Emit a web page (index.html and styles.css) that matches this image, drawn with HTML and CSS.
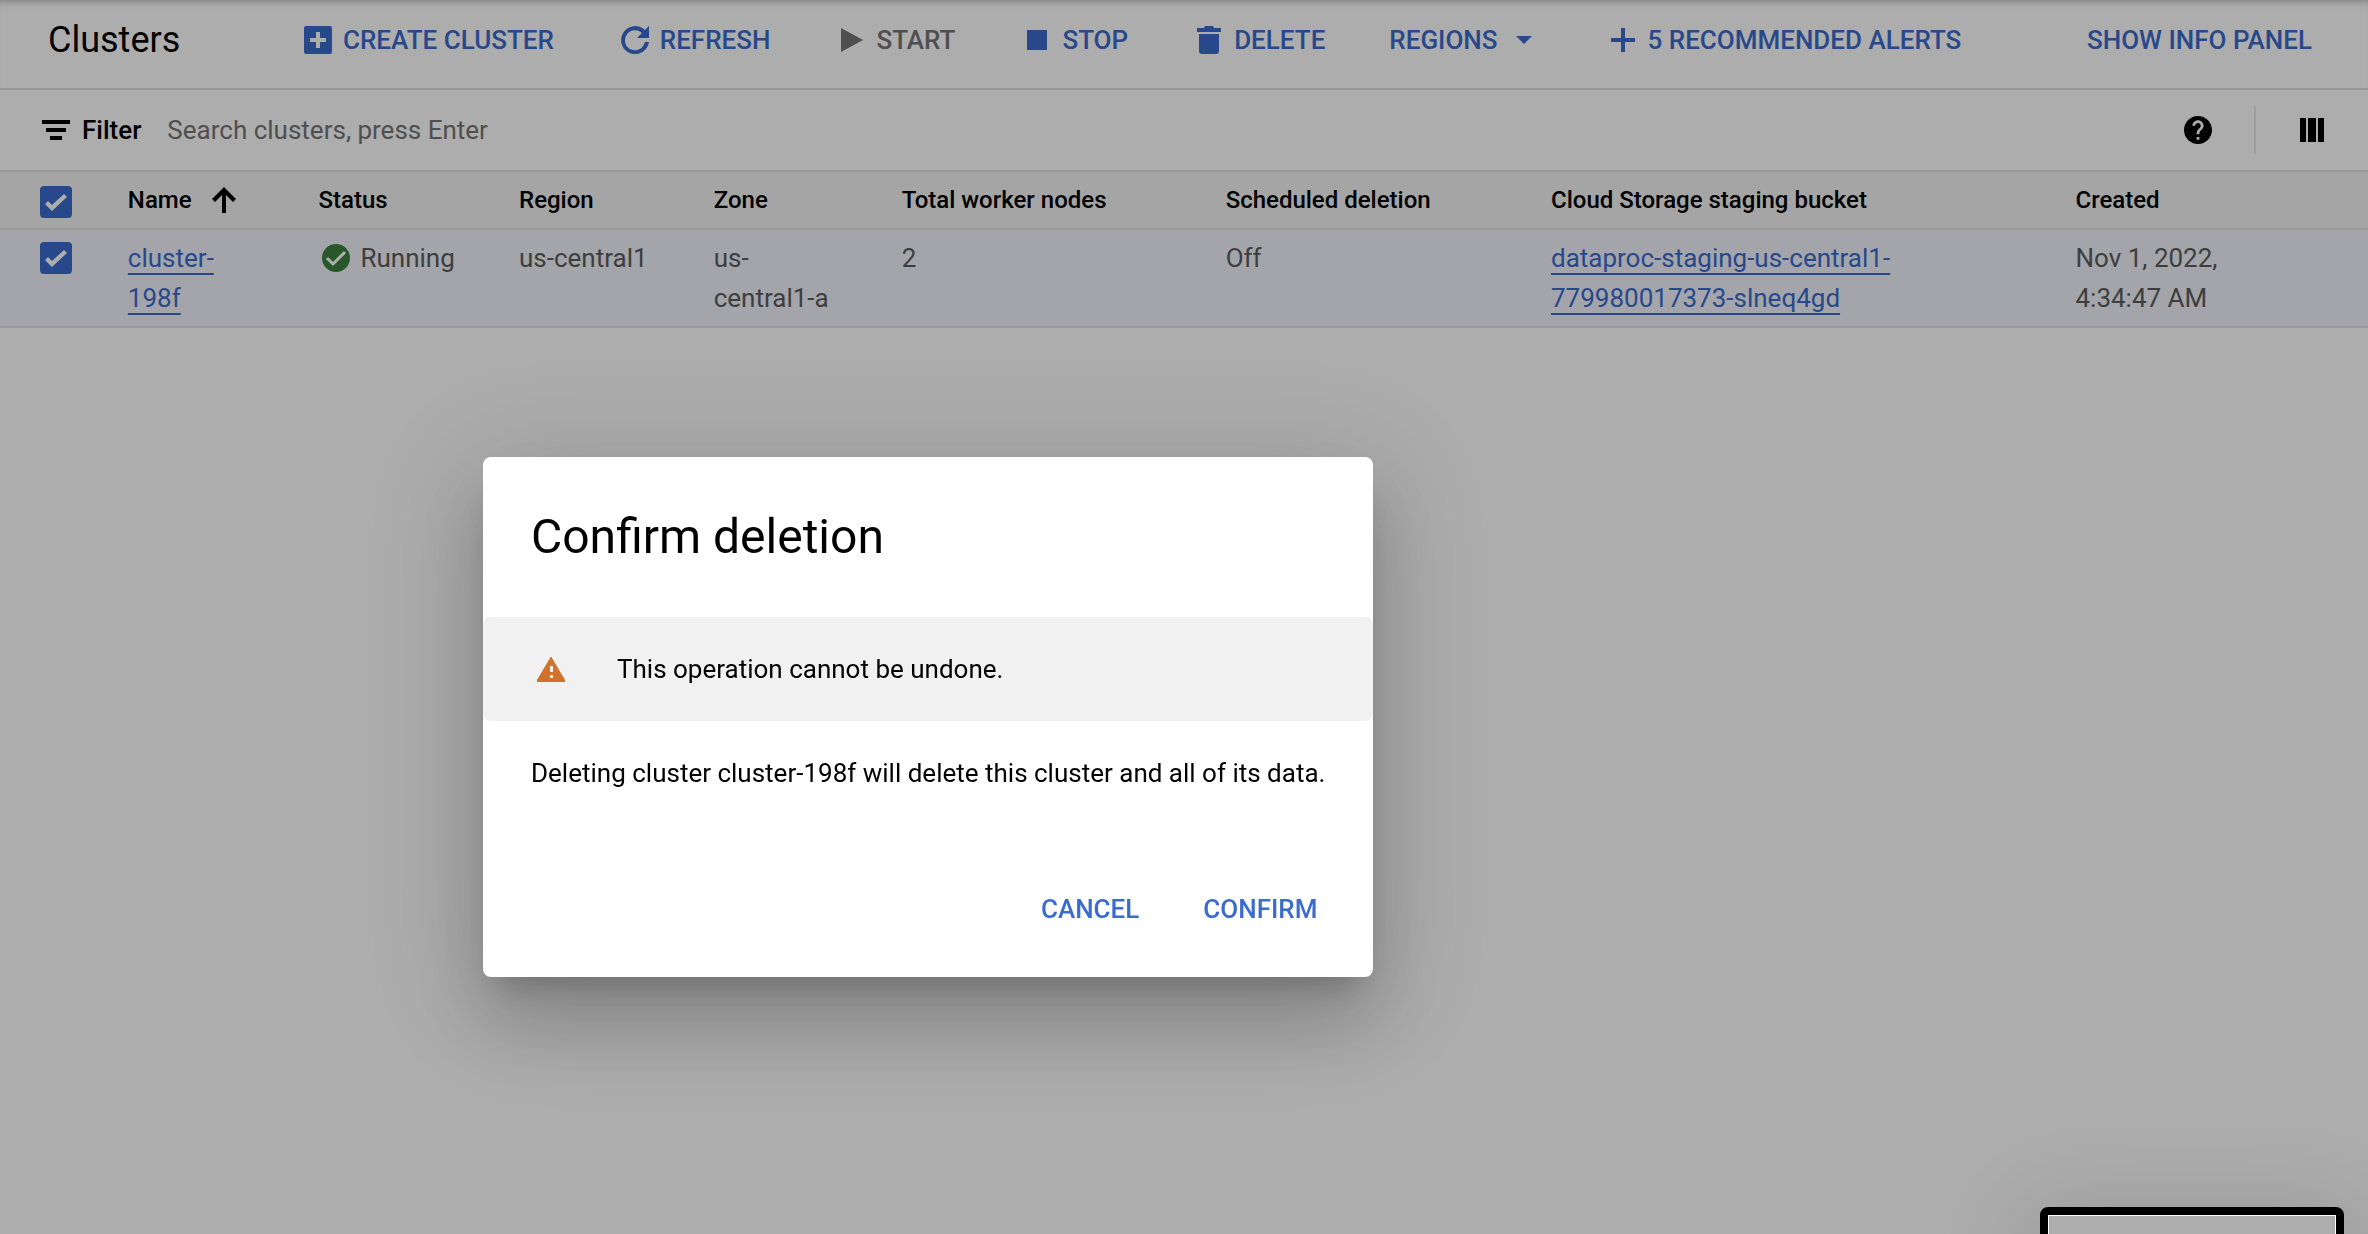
FILE: index.html
```html
<!DOCTYPE html>
<html lang="en">
<head>
<meta charset="utf-8">
<title>Clusters</title>
<meta name="viewport" content="width=device-width, initial-scale=1">
<link rel="stylesheet" href="styles.css">
</head>
<body>
<header class="toolbar">
  <h1 class="title">Clusters</h1>
  <button class="action create"><svg class="icon" viewBox="0 0 28 28"><path fill-rule="evenodd" d="M2 0h24a2 2 0 0 1 2 2v24a2 2 0 0 1-2 2H2a2 2 0 0 1-2-2V2a2 2 0 0 1 2-2zM12 6v6H6v4h6v6h4v-6h6v-4h-6V6z"/></svg>CREATE CLUSTER</button>
  <button class="action refresh"><svg class="icon" viewBox="0 0 28 28"><path d="M28 0v12H16l4.9-4.9A10 10 0 1 0 23.800 16H28A14 14 0 1 1 23.900 4.100z"/></svg>REFRESH</button>
  <button class="action start" disabled><svg class="icon" viewBox="0 0 28 28"><path d="M4 2l22 12L4 26z"/></svg>START</button>
  <button class="action stop"><svg class="icon" viewBox="0 0 28 28"><path d="M4 4h20v20H4z"/></svg>STOP</button>
  <button class="action delete"><svg class="icon" viewBox="0 0 28 28"><path d="M2 2h7l1-2h8l1 2h7v4H2zM4 8h20v17a3 3 0 0 1-3 3H7a3 3 0 0 1-3-3z"/></svg>DELETE</button>
  <button class="action regions">REGIONS<svg class="caret" viewBox="0 0 16 8"><path d="M0 0h16L8 8z"/></svg></button>
  <button class="action alerts"><svg class="icon" viewBox="0 0 28 28"><path d="M12 2h4v10h10v4H16v10h-4V16H2v-4h10z"/></svg>5 RECOMMENDED ALERTS</button>
  <button class="action info">SHOW INFO PANEL</button>
</header>
<main>
  <div class="filter">
    <svg class="icon" viewBox="0 0 28 20"><path d="M0 0h28v4H0zM4 8h20v4H4zM8 16h12v4H8z"/></svg>
    <label class="filter-label" for="search">Filter</label>
    <input class="search" id="search" type="text" placeholder="Search clusters, press Enter">
    <button class="tool" aria-label="Help"><svg class="icon" viewBox="2 2 20 20"><path d="M12 2C6.480 2 2 6.480 2 12s4.480 10 10 10 10-4.480 10-10S17.520 2 12 2zm1 17h-2v-2h2v2zm2.070-7.750l-.9.920C13.450 12.900 13 13.500 13 15h-2v-.5c0-1.100.45-2.100 1.170-2.830l1.240-1.260c.37-.36.59-.86.59-1.410 0-1.100-.9-2-2-2s-2 .9-2 2H8c0-2.210 1.790-4 4-4s4 1.790 4 4c0 .88-.36 1.680-.93 2.250z"/></svg></button>
    <span class="divider"></span>
    <button class="tool" aria-label="Column display options"><svg class="columns" viewBox="0 0 24 24"><path d="M0 0h6v24H0zM8 0h8v24H8zM18 0h6v24h-6z"/></svg></button>
  </div>
  <table class="clusters">
    <colgroup><col class="c-check"><col class="c-name"><col class="c-status"><col class="c-region"><col class="c-zone"><col class="c-nodes"><col class="c-deletion"><col class="c-bucket"><col class="c-created"></colgroup>
    <thead>
      <tr>
        <th><input class="check" type="checkbox" checked aria-label="Select all clusters"></th>
        <th><span class="sorted">Name<svg class="arrow" viewBox="0 0 24 26"><path d="M12 0l12 12-3 3-7-7v18h-4V8l-7 7-3-3z"/></svg></span></th>
        <th>Status</th><th>Region</th><th>Zone</th><th>Total worker nodes</th><th>Scheduled deletion</th><th>Cloud Storage staging bucket</th><th>Created</th>
      </tr>
    </thead>
    <tbody>
      <tr>
        <td><input class="check" type="checkbox" checked aria-label="Select cluster-198f"></td>
        <td><a class="link" href="#">cluster-<br>198f</a></td>
        <td><span class="status"><svg class="icon" viewBox="0 0 28 28"><circle cx="14" cy="14" r="14"/><path class="tick" d="M5 14l6 6L23 8"/></svg>Running</span></td>
        <td>us-central1</td>
        <td>us-<br>central1-a</td>
        <td>2</td>
        <td>Off</td>
        <td><a class="link" href="#">dataproc-staging-us-central1-<br>779980017373-slneq4gd</a></td>
        <td>Nov 1, 2022,<br>4:34:47 AM</td>
      </tr>
    </tbody>
  </table>
</main>
<div class="scrim"></div>
<section class="dialog" role="dialog" aria-labelledby="dialog-title">
  <h2 class="dialog-title" id="dialog-title">Confirm deletion</h2>
  <div class="warning"><svg class="warn-icon" viewBox="0 0 28 25"><path class="warn-shape" d="M13 1a1 1 0 0 1 2 0l13 22a1 1 0 0 1-1 2H1a1 1 0 0 1-1-2z"/><path class="warn-mark" d="M13 9h3v6h-3zM13 18h3v3h-3z"/></svg>This operation cannot be undone.</div>
  <p class="message">Deleting cluster cluster-198f will delete this cluster and all of its data.</p>
  <div class="buttons"><button class="action">CANCEL</button><button class="action">CONFIRM</button></div>
</section>
<aside class="corner-panel"></aside>
</body>
</html>
```
FILE: styles.css
```css
* { box-sizing: border-box; }

html, body { height: 100%; }

body {
  margin: 0;
  overflow: hidden;
  background: #fff;
  color: #000;
  font: 26px/40px Roboto, sans-serif;
}

button {
  padding: 0;
  border: 0;
  background: none;
  font: inherit;
}

.icon { width: 28px; height: 28px; fill: currentColor; flex: none; }

.toolbar {
  display: flex;
  align-items: center;
  height: 90px;
  padding: 0 56px 8px 48px;
  border-bottom: 2px solid #e0e0e0;
  box-shadow: inset 0 8px 8px -8px rgba(0, 0, 0, .4);
}

.title {
  width: 256px;
  margin: 0;
  font-size: 36px;
  font-weight: 400;
}

.action {
  display: flex;
  align-items: center;
  gap: 11px;
  color: #3b6bcf;
  font-weight: 500;
  white-space: nowrap;
}

.refresh { margin-left: 67px; }
.start { margin-left: 67px; }
.start:disabled { color: #757575; }
.stop { margin-left: 68px; }
.delete { margin-left: 67px; }
.regions { gap: 18px; margin-left: 64px; }
.alerts { margin-left: 77px; }
.info { margin-left: auto; }

.caret { width: 16px; height: 8px; fill: currentColor; }

.filter {
  display: flex;
  align-items: center;
  height: 82px;
  padding: 0 44px 0 42px;
  border-bottom: 2px solid #e0e0e0;
}

.filter > .icon { height: 20px; }
.filter-label { margin: 0 26px 0 12px; font-weight: 500; }

.search {
  flex: 1;
  min-width: 0;
  padding: 0;
  border: 0;
  background: none;
  font: inherit;
}

.search::placeholder { color: #757575; opacity: 1; }

.tool { display: flex; }
.divider { width: 2px; height: 48px; margin: 0 44px 0 42px; background: #ebebeb; }
.columns { width: 24px; height: 24px; }

.clusters {
  width: 100%;
  border-spacing: 0;
  table-layout: fixed;
}

.c-check { width: 5.400%; }
.c-name { width: 8.050%; }
.c-status { width: 8.470%; }
.c-region { width: 8.220%; }
.c-zone { width: 7.940%; }
.c-nodes { width: 13.680%; }
.c-deletion { width: 13.740%; }
.c-bucket { width: 22.150%; }

.clusters th {
  height: 58px;
  padding: 0;
  border-bottom: 2px solid #e0e0e0;
  background: #f3f3f3;
  font-size: 24px;
  font-weight: 500;
  text-align: left;
}

.clusters td {
  height: 98px;
  padding: 8px 0;
  border-bottom: 2px solid #e0e0e0;
  background: #f1f3fb;
  color: #5c5c5c;
  vertical-align: top;
}

.clusters th:first-child, .clusters td:first-child { padding-left: 40px; }
.clusters th:first-child { padding-top: 4px; }

.check {
  display: block;
  width: 32px;
  height: 32px;
  margin: 4px 0;
  appearance: none;
  border-radius: 4px;
  background: #3b6bcf;
}

.check::before {
  content: "";
  display: block;
  width: 32px;
  height: 32px;
  background: #fff;
  clip-path: polygon(5px 18px, 8px 15px, 12px 19px, 24px 8px, 27px 11px, 12px 25px);
}

.sorted { display: flex; align-items: center; gap: 20px; }
.arrow { width: 24px; height: 26px; }

.link {
  color: #3b6bcf;
  text-decoration: underline;
  text-decoration-thickness: 2px;
  text-decoration-skip-ink: none;
  text-underline-offset: 6px;
}

.status { display: flex; align-items: center; gap: 10px; padding-left: 4px; }
.status circle { fill: #3b813e; }
.tick { fill: none; stroke: #fff; stroke-width: 3; }

.scrim {
  position: fixed;
  inset: 0;
  background: rgba(0, 0, 0, .32);
}

.dialog {
  position: fixed;
  top: 457px;
  left: 483px;
  border-radius: 8px;
  background: #fff;
  box-shadow: 0 22px 30px -14px rgba(0, 0, 0, .2), 0 48px 76px 6px rgba(0, 0, 0, .14), 0 18px 120px 24px rgba(0, 0, 0, .12);
}

.dialog-title {
  margin: 0;
  padding: 48px;
  font-size: 48px;
  font-weight: 400;
  line-height: 64px;
}

.warning {
  display: flex;
  align-items: center;
  gap: 52px;
  height: 104px;
  padding: 0 54px;
  border-radius: 8px;
  background: #f1f1f1;
}

.warn-icon { width: 28px; height: 25px; }
.warn-shape { fill: #d0722c; }
.warn-mark { fill: #f1f1f1; }

.message { margin: 0; padding: 32px 48px 64px; }

.buttons {
  display: flex;
  justify-content: flex-end;
  gap: 64px;
  padding: 32px 56px 48px;
}

.corner-panel {
  position: fixed;
  right: 24px;
  bottom: -201px;
  width: 304px;
  height: 228px;
  border: 8px solid #000;
  border-radius: 8px;
  background: #adadad;
  box-shadow: inset 0 0 0 1px #fff, 0 18px 92px 16px rgba(0, 0, 0, .12);
}
```
